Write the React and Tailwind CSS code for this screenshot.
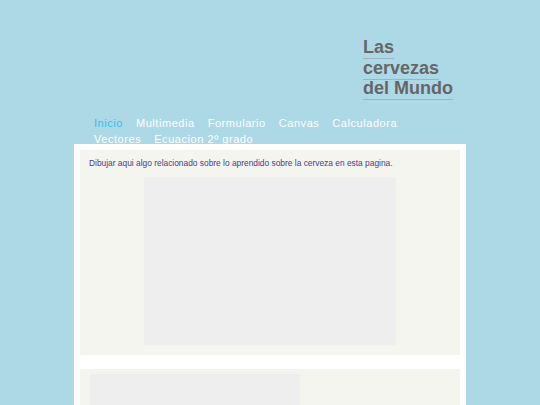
import React from 'react';

const links = ['Inicio', 'Multimedia', 'Formulario', 'Canvas', 'Calculadora', 'Vectores', 'Ecuacion 2º grado'];

const App = () => {
  return (
    <div className="min-h-[405px] h-[405px] overflow-hidden bg-[#add8e6] font-['Liberation_Sans',Arial,sans-serif]">
      {/* Title */}
      <div className="pl-[363px] pt-[37px]">
        <h1 className="text-[18px] leading-[20.5px] font-bold text-[#666666]">
          <span className="underline decoration-1 underline-offset-[5px] decoration-[#9bb4bd]">Las</span>
          <br />
          <span className="underline decoration-1 underline-offset-[5px] decoration-[#9bb4bd]">cervezas</span>
          <br />
          <span className="underline decoration-1 underline-offset-[5px] decoration-[#9bb4bd]">del Mundo</span>
        </h1>
      </div>

      {/* Nav */}
      <nav className="mt-[16.5px] h-[29px] pl-[94px]">
        <ul className="flex flex-wrap w-[330px] gap-x-[13px] text-[11px] leading-[16px] tracking-[0.55px]">
          {links.map((l, i) => (
            <li key={l} className={i === 0 ? 'text-[#33c3e8]' : 'text-white'}>
              {l}
            </li>
          ))}
        </ul>
      </nav>

      {/* Content */}
      <div className="ml-[74px] w-[392px] bg-white p-[6px] relative">
        <section className="bg-[#f5f5f0] pt-[7px] pb-[10px]">
          <p className="pl-[9px] text-[8.4px] leading-[12px] text-[#483d8b]">
            Dibujar aqui algo relacionado sobre lo aprendido sobre la cerveza en esta pagina.
          </p>
          <div className="mx-auto mt-[8px] w-[252px] h-[168px] bg-[#eeeeee]" />
        </section>
        <section className="mt-[14px] bg-[#f5f5f0] pt-[5px] pl-[10px] h-[60px]">
          <div className="w-[210px] h-[60px] bg-[#eeeeee]" />
        </section>
      </div>
    </div>
  );
};

export default App;
